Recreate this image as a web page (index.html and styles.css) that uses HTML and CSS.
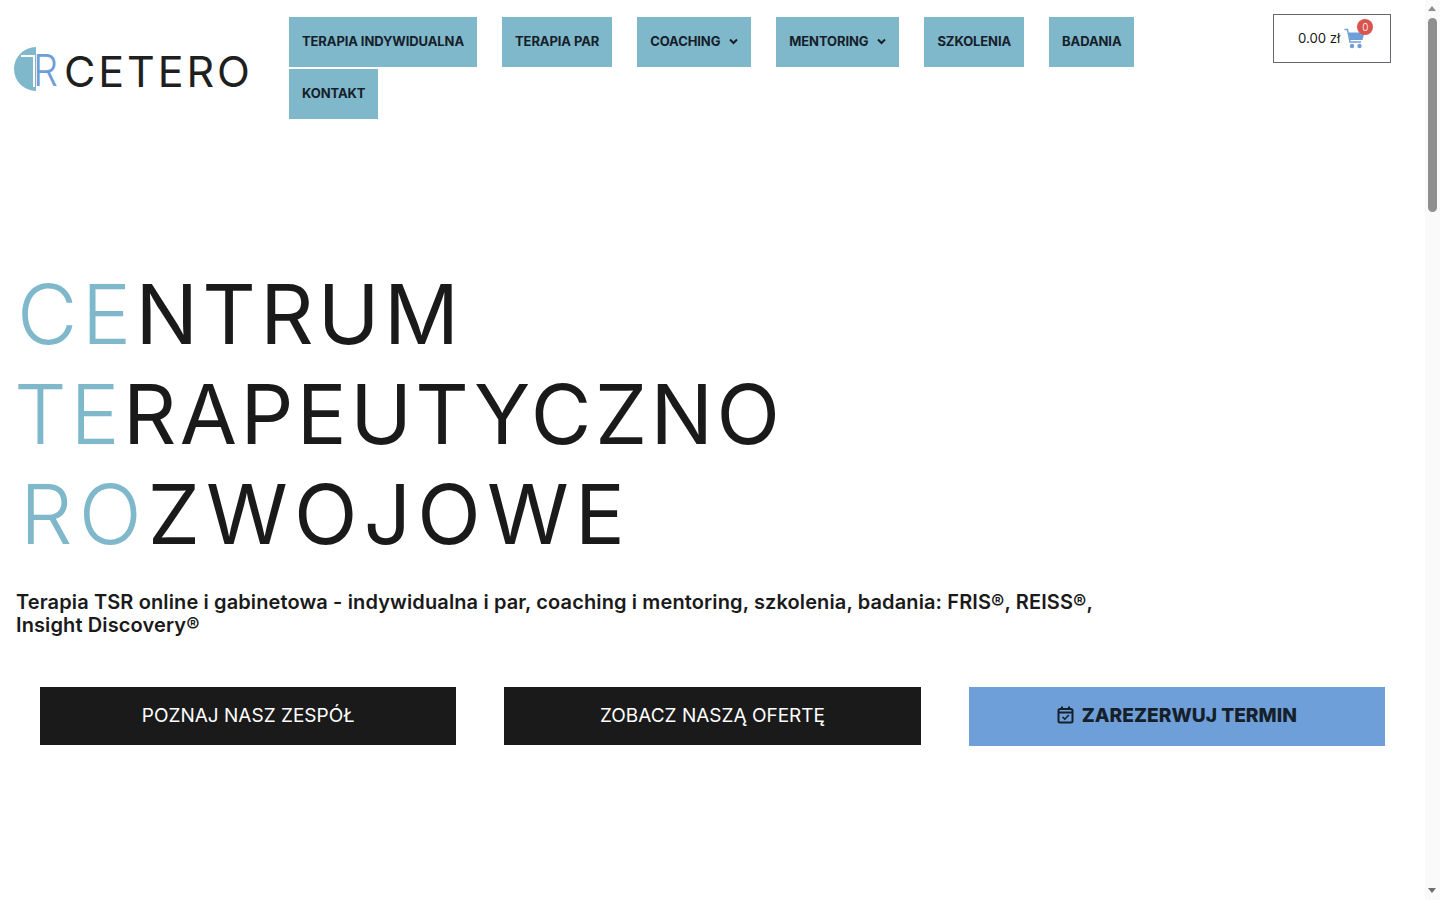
FILE: index.html
```html
<!DOCTYPE html>
<html lang="pl">
<head>
    <meta charset="UTF-8">
    <meta name="viewport" content="width=device-width, initial-scale=1.0">
    <title>Cetero - Centrum Terapeutyczno Rozwojowe</title>
    <link rel="stylesheet" href="styles.css">
</head>
<body>
    <div class="page">
        <header class="site-header">
            <a class="logo" href="#">
                <svg class="logo-mark" width="48" height="58" viewBox="0 -6 48 58">
                    <path d="M22 0 A22 22 0 0 0 22 44 Z" fill="#7fb8ca"/>
                    <rect x="7" y="8" width="14" height="2" fill="white"/>
                    <rect x="19" y="8" width="2" height="32" fill="white"/>
                    <text class="mark-r" x="19" y="39" textLength="25" lengthAdjust="spacingAndGlyphs">R</text>
                </svg>
                <span class="logo-text">CETERO</span>
            </a>

            <nav class="main-nav">
                <a href="#">TERAPIA INDYWIDUALNA</a>
                <a href="#">TERAPIA PAR</a>
                <a href="#">COACHING
                    <svg class="chevron" width="9" height="7" viewBox="0 0 9 7"><path d="M1 1.5 L4.5 5 L8 1.5" fill="none" stroke="#16202a" stroke-width="2"/></svg>
                </a>
                <a href="#">MENTORING
                    <svg class="chevron" width="9" height="7" viewBox="0 0 9 7"><path d="M1 1.5 L4.5 5 L8 1.5" fill="none" stroke="#16202a" stroke-width="2"/></svg>
                </a>
                <a href="#">SZKOLENIA</a>
                <a href="#">BADANIA</a>
                <a href="#">KONTAKT</a>
            </nav>

            <a class="cart" href="#">
                <span>0.00 zł</span>
                <span class="cart-icon">
                    <svg width="22" height="21" viewBox="0 0 22 21">
                        <path d="M0.5 1.5 H3.5 L6 14 H17" fill="none" stroke="#6f9fd8" stroke-width="1.4"/>
                        <path d="M4.5 4.5 H20.5 L18.5 12 H6 Z" fill="#6f9fd8"/>
                        <circle cx="8" cy="18" r="2.2" fill="#6f9fd8"/>
                        <circle cx="15.5" cy="18" r="2.2" fill="#6f9fd8"/>
                    </svg>
                    <span class="cart-count">0</span>
                </span>
            </a>
        </header>

        <section class="hero">
            <h1>
                <span class="line line-one"><span class="accent">CE</span>NTRUM</span>
                <span class="line line-two"><span class="accent">TE</span>RAPEUTYCZNO</span>
                <span class="line line-three"><span class="accent">RO</span>ZWOJOWE</span>
            </h1>
            <p class="lead">Terapia TSR online i gabinetowa - indywidualna i par, coaching i mentoring, szkolenia, badania: FRIS®, REISS®, Insight Discovery®</p>

            <div class="hero-buttons">
                <a class="btn" href="#">POZNAJ NASZ ZESPÓŁ</a>
                <a class="btn" href="#">ZOBACZ NASZĄ OFERTĘ</a>
                <a class="btn btn-book" href="#">
                    <svg width="17" height="18" viewBox="0 0 17 18">
                        <rect x="1.5" y="3" width="14" height="13.5" rx="1.5" fill="none" stroke="#16202a" stroke-width="2"/>
                        <path d="M1.5 6.5 H15.5" stroke="#16202a" stroke-width="2"/>
                        <path d="M5 0.5 V3.5 M12 0.5 V3.5" stroke="#16202a" stroke-width="2"/>
                        <path d="M5.5 11 L7.8 13.2 L11.8 9" fill="none" stroke="#16202a" stroke-width="1.6"/>
                    </svg>
                    ZAREZERWUJ TERMIN
                </a>
            </div>
        </section>
    </div>

    <div class="scrollbar">
        <span class="arrow-up"></span>
        <span class="thumb"></span>
        <span class="arrow-down"></span>
    </div>
</body>
</html>
```

FILE: styles.css
```css
* {
    margin: 0;
    padding: 0;
    box-sizing: border-box;
}

html, body {
    height: 100%;
    overflow: hidden;
}

body {
    font-family: Inter, 'Open Sans', sans-serif;
    background: white;
    color: #1a1a1a;
}

a {
    color: inherit;
    text-decoration: none;
}

.page {
    width: 1425px;
}

.site-header {
    display: flex;
    align-items: flex-start;
    height: 119px;
    padding: 14px 34px 0 14px;
}

.logo {
    display: flex;
    align-items: flex-start;
    gap: 2px;
    width: 275px;
    margin-top: 27px;
    flex-shrink: 0;
}

.logo-mark {
    flex-shrink: 0;
}

.mark-r {
    font-size: 43px;
    font-weight: 300;
    fill: #6f9fd8;
}

.logo-text {
    margin-top: 8px;
    font-size: 43px;
    font-weight: 400;
    letter-spacing: 2.9px;
    line-height: 44px;
    color: #1f1f1f;
}

.main-nav {
    display: flex;
    flex-wrap: wrap;
    column-gap: 25px;
    row-gap: 2px;
    width: 880px;
    margin-top: 3px;
}

.main-nav a {
    display: flex;
    align-items: center;
    gap: 9px;
    height: 50px;
    padding: 0 13px 2px;
    background: #7fb8ca;
    color: #16202a;
    font-size: 13px;
    font-weight: 700;
    letter-spacing: -0.1px;
}

.cart {
    display: flex;
    align-items: center;
    gap: 4px;
    width: 118px;
    height: 49px;
    margin-left: auto;
    padding-left: 24px;
    padding-bottom: 1px;
    border: 1px solid #667;
    font-size: 13.2px;
}

.cart-icon {
    position: relative;
    display: flex;
}

.cart-count {
    position: absolute;
    top: -9px;
    right: -7px;
    width: 16px;
    height: 16px;
    border-radius: 50%;
    background: #d9534f;
    color: white;
    font-size: 10px;
    font-weight: 300;
    line-height: 16px;
    text-align: center;
}

.hero {
    padding: 145px 16px 0;
}

h1 {
    font-size: 83px;
    font-weight: 400;
    line-height: 100px;
    letter-spacing: 3px;
}

.line {
    display: block;
}

.line-one {
    padding-left: 1px;
    letter-spacing: 4.3px;
}

.line-two {
    margin-left: -2px;
    letter-spacing: 3.4px;
}

.line-three {
    padding-left: 4px;
    letter-spacing: 6.2px;
}

.accent {
    color: #7fb8ca;
    font-weight: 300;
}

.line-three .accent {
    letter-spacing: 6px;
}

.lead {
    width: 1100px;
    margin-top: 27px;
    font-size: 20px;
    font-weight: 600;
    line-height: 23px;
    letter-spacing: 0.12px;
}

.hero-buttons {
    display: flex;
    gap: 48px;
    margin-top: 50px;
    padding: 0 24px;
}

.btn {
    display: flex;
    align-items: center;
    justify-content: center;
    gap: 8px;
    flex: 1;
    height: 58px;
    padding-bottom: 2px;
    background: #1a1a1a;
    color: white;
    font-size: 19px;
}

.btn-book {
    height: 59px;
    padding-bottom: 3px;
    background: #6f9fd8;
    color: #16202a;
    font-size: 19.2px;
    font-weight: 800;
}

.scrollbar {
    position: fixed;
    top: 0;
    right: 0;
    bottom: 0;
    width: 15px;
    background: #fafafa;
}

.thumb {
    position: absolute;
    top: 18px;
    left: 3px;
    width: 9px;
    height: 194px;
    border-radius: 5px;
    background: #8f8f8f;
}

.arrow-up,
.arrow-down {
    position: absolute;
    left: 3px;
    width: 0;
    height: 0;
    border-left: 4.5px solid transparent;
    border-right: 4.5px solid transparent;
}

.arrow-up {
    top: 6px;
    border-bottom: 5px solid #8f8f8f;
}

.arrow-down {
    bottom: 7px;
    border-top: 5px solid #6e6e6e;
}
```
